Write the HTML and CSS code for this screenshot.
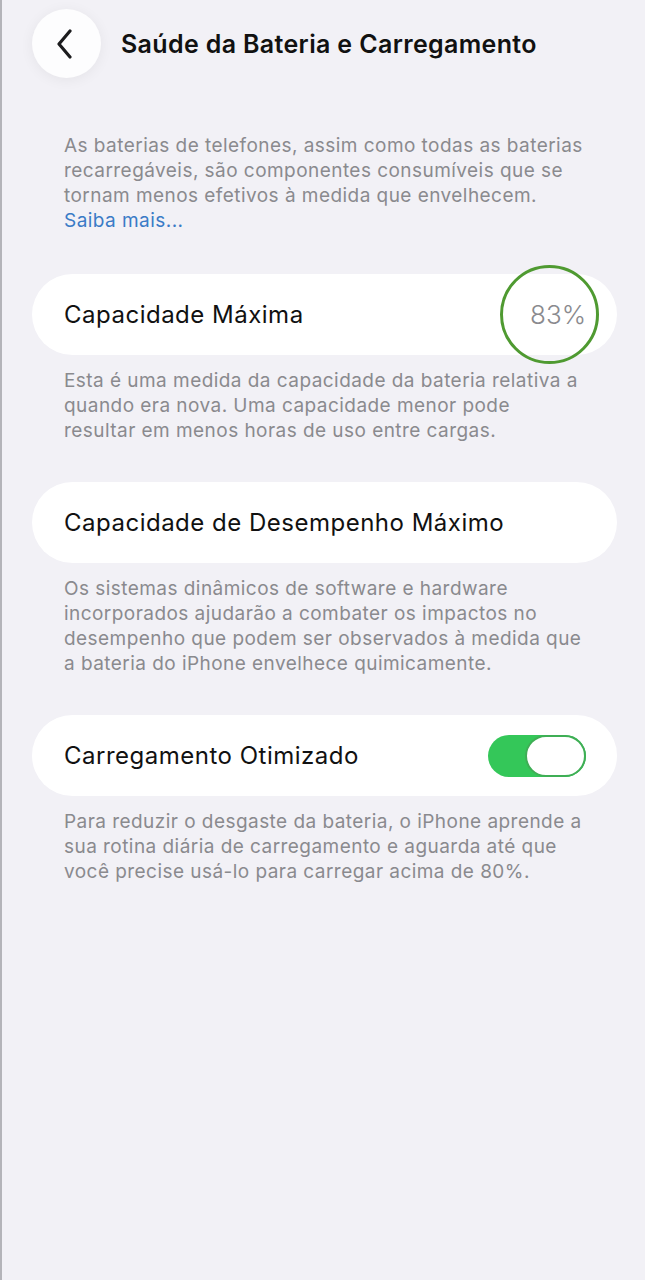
FILE: index.html
```html
<!DOCTYPE html>
<html lang="pt-BR">
<head>
<meta charset="utf-8">
<title>Saúde da Bateria e Carregamento</title>
<link rel="stylesheet" href="styles.css">
</head>
<body>
<div class="screen">
  <header class="topbar">
    <div class="back">
      <svg width="20" height="30" viewBox="0 0 20 30"><path d="M15 2 L4 15 L15 28" fill="none" stroke="#1c1c1e" stroke-width="3.2" stroke-linecap="round" stroke-linejoin="round"/></svg>
    </div>
    <h1 class="title">Saúde da Bateria e Carregamento</h1>
  </header>
  <main class="content">
    <p class="note intro">As baterias de telefones, assim como todas as baterias<br>recarregáveis, são componentes consumíveis que se<br>tornam menos efetivos à medida que envelhecem.<br><span class="link">Saiba mais...</span></p>

    <div class="card">
      <span class="label">Capacidade Máxima</span>
      <span class="ring">83%</span>
    </div>
    <p class="note">Esta é uma medida da capacidade da bateria relativa a<br>quando era nova. Uma capacidade menor pode<br>resultar em menos horas de uso entre cargas.</p>

    <div class="card">
      <span class="label">Capacidade de Desempenho Máximo</span>
    </div>
    <p class="note">Os sistemas dinâmicos de software e hardware<br>incorporados ajudarão a combater os impactos no<br>desempenho que podem ser observados à medida que<br>a bateria do iPhone envelhece quimicamente.</p>

    <div class="card">
      <span class="label">Carregamento Otimizado</span>
      <span class="toggle"><span class="knob"></span></span>
    </div>
    <p class="note">Para reduzir o desgaste da bateria, o iPhone aprende a<br>sua rotina diária de carregamento e aguarda até que<br>você precise usá-lo para carregar acima de 80%.</p>
  </main>
</div>
</body>
</html>
```
FILE: styles.css
```css
html, body {
  margin: 0;
  padding: 0;
  background: #f2f1f6;
}
body {
  font-family: Inter, Roboto, "Liberation Sans", sans-serif;
  color: #000;
}
.screen {
  min-height: 1280px;
  box-sizing: border-box;
  border-left: 2px solid #b4b4b9;
}
.topbar {
  display: flex;
  align-items: center;
  padding: 9px 0 0 30px;
  gap: 20px;
}
.back {
  width: 69px;
  height: 69px;
  border-radius: 50%;
  background: #fdfdfe;
  box-shadow: 0 2px 14px rgba(0,0,0,0.06);
  display: flex;
  align-items: center;
  justify-content: center;
}
.back svg {
  margin-left: -3px;
}
.title {
  margin: 0;
  font-size: 25px;
  font-weight: 600;
  letter-spacing: 0.35px;
  color: #111;
}
.content {
  padding: 0 28px 0 30px;
}
.note {
  margin: 0;
  padding: 0 32px;
  font-size: 19px;
  line-height: 25px;
  letter-spacing: 0.45px;
  color: #8a8a8e;
  white-space: nowrap;
}
.intro {
  margin-top: 55px;
  margin-bottom: 41px;
}
.link {
  color: #3a7bc6;
}
.card {
  height: 81px;
  border-radius: 41px;
  background: #fff;
  display: flex;
  align-items: center;
  justify-content: space-between;
  padding: 0 31px 0 32px;
  margin-bottom: 13px;
}
.card + .note {
  margin-bottom: 39px;
}
.label {
  font-size: 24px;
  letter-spacing: 0.5px;
  color: #111;
}
.ring {
  width: 93px;
  height: 93px;
  margin: -9px -13px -9px 0;
  padding-left: 17px;
  box-sizing: content-box;
  width: 76px;
  border: 3px solid #4f9a31;
  border-radius: 50%;
  display: flex;
  align-items: center;
  justify-content: center;
  font-size: 26px;
  font-weight: 300;
  color: #8a8a8e;
}
.toggle {
  width: 98px;
  height: 42px;
  border-radius: 21px;
  background: #34c759;
  display: flex;
  justify-content: flex-end;
  box-sizing: border-box;
}
.knob {
  width: 61px;
  height: 42px;
  border-radius: 21px;
  background: #fff;
  box-sizing: border-box;
  border: 2px solid #3fae55;
}
```
